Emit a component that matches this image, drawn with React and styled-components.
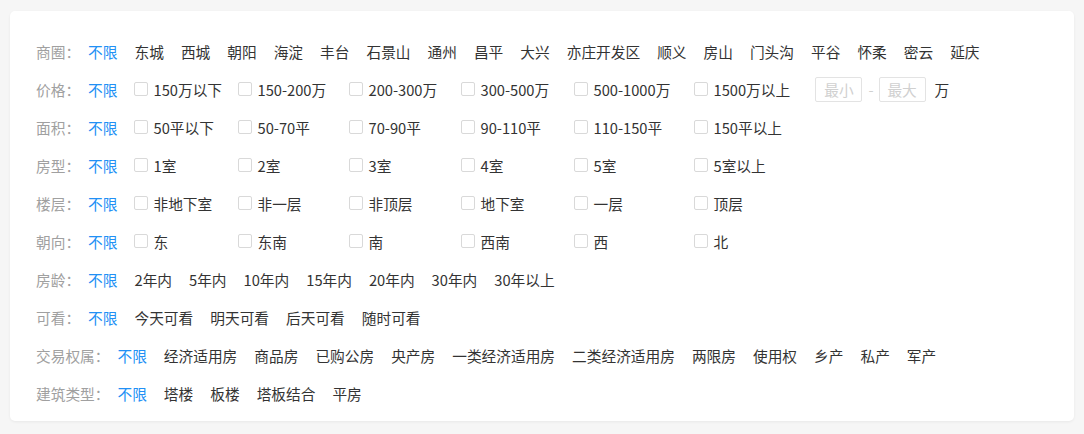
import React, { useState } from 'react'
import styled, { createGlobalStyle } from 'styled-components'

const GlobalStyle = createGlobalStyle`
  html, body {
    margin: 0;
    padding: 0;
    background: #f6f6f6;
    font-family: "Noto Sans CJK SC", "Noto Sans", sans-serif;
    font-size: 14.7px;
  }
  * { box-sizing: border-box; }
`

const filters = [
  { label: '商圈', options: ['东城', '西城', '朝阳', '海淀', '丰台', '石景山', '通州', '昌平', '大兴', '亦庄开发区', '顺义', '房山', '门头沟', '平谷', '怀柔', '密云', '延庆'] },
  { label: '价格', check: true, range: '万', options: ['150万以下', '150-200万', '200-300万', '300-500万', '500-1000万', '1500万以上'] },
  { label: '面积', check: true, options: ['50平以下', '50-70平', '70-90平', '90-110平', '110-150平', '150平以上'] },
  { label: '房型', check: true, options: ['1室', '2室', '3室', '4室', '5室', '5室以上'] },
  { label: '楼层', check: true, options: ['非地下室', '非一层', '非顶层', '地下室', '一层', '顶层'] },
  { label: '朝向', check: true, options: ['东', '东南', '南', '西南', '西', '北'] },
  { label: '房龄', options: ['2年内', '5年内', '10年内', '15年内', '20年内', '30年内', '30年以上'] },
  { label: '可看', options: ['今天可看', '明天可看', '后天可看', '随时可看'] },
  { label: '交易权属', options: ['经济适用房', '商品房', '已购公房', '央产房', '一类经济适用房', '二类经济适用房', '两限房', '使用权', '乡产', '私产', '军产'] },
  { label: '建筑类型', options: ['塔楼', '板楼', '塔板结合', '平房'] },
]

const Page = styled.div`
  padding: 11px 10px 13px;
`

const Card = styled.div`
  background: #fff;
  border-radius: 5px;
  box-shadow: 0 1px 3px rgba(0, 0, 0, 0.06);
  padding: 21px 26px 9px;
  height: 410px;
`

const Row = styled.div`
  display: flex;
  align-items: center;
  height: 38px;
  white-space: nowrap;
`

const Label = styled.span`
  color: #a0a0a0;
  margin-right: 8px;
  flex-shrink: 0;
`

const Options = styled.div`
  display: flex;
  align-items: center;
  gap: 17px;
`

const Option = styled.span`
  color: ${p => (p.$active ? '#2190f5' : '#333')};
  cursor: pointer;
`

const CheckGrid = styled.div`
  display: grid;
  grid-template-columns: 104px 111px 112px 113px 120px 121px;
  align-items: center;
`

const CheckItem = styled.label`
  display: flex;
  align-items: center;
  color: #333;
  cursor: pointer;
`

const Box = styled.span`
  width: 14px;
  height: 14px;
  border: 1px solid #d9d9d9;
  border-radius: 2px;
  margin-right: 5px;
  background: ${p => (p.$on ? '#2190f5' : '#fff')};
  flex-shrink: 0;
`

const Range = styled.div`
  display: flex;
  align-items: center;
`

const RangeInput = styled.input`
  width: 47px;
  height: 25px;
  border: 1px solid #e3e3e3;
  border-radius: 2px;
  font: inherit;
  text-align: center;
  color: #333;
  padding: 0;
  outline: none;
  &::placeholder { color: #d0d0d0; }
`

const Dash = styled.span`
  color: #d0d0d0;
  margin: 0 5px 0 6px;
`

const Unit = styled.span`
  color: #333;
  margin-left: 9px;
`

function FilterRow({ filter }) {
  const [checked, setChecked] = useState([])
  const toggle = o => setChecked(c => (c.includes(o) ? c.filter(x => x !== o) : [...c, o]))

  return (
    <Row>
      <Label>{filter.label}：</Label>
      <Options>
        <Option $active>不限</Option>
        {filter.check ? (
          <CheckGrid>
            {filter.options.map(o => (
              <CheckItem key={o} onClick={() => toggle(o)}>
                <Box $on={checked.includes(o)} />
                {o}
              </CheckItem>
            ))}
          </CheckGrid>
        ) : (
          filter.options.map(o => <Option key={o}>{o}</Option>)
        )}
      </Options>
      {filter.range && (
        <Range>
          <RangeInput placeholder="最小" />
          <Dash>-</Dash>
          <RangeInput placeholder="最大" />
          <Unit>{filter.range}</Unit>
        </Range>
      )}
    </Row>
  )
}

export default function App() {
  return (
    <Page>
      <GlobalStyle />
      <Card>
        {filters.map(f => (
          <FilterRow key={f.label} filter={f} />
        ))}
      </Card>
    </Page>
  )
}
